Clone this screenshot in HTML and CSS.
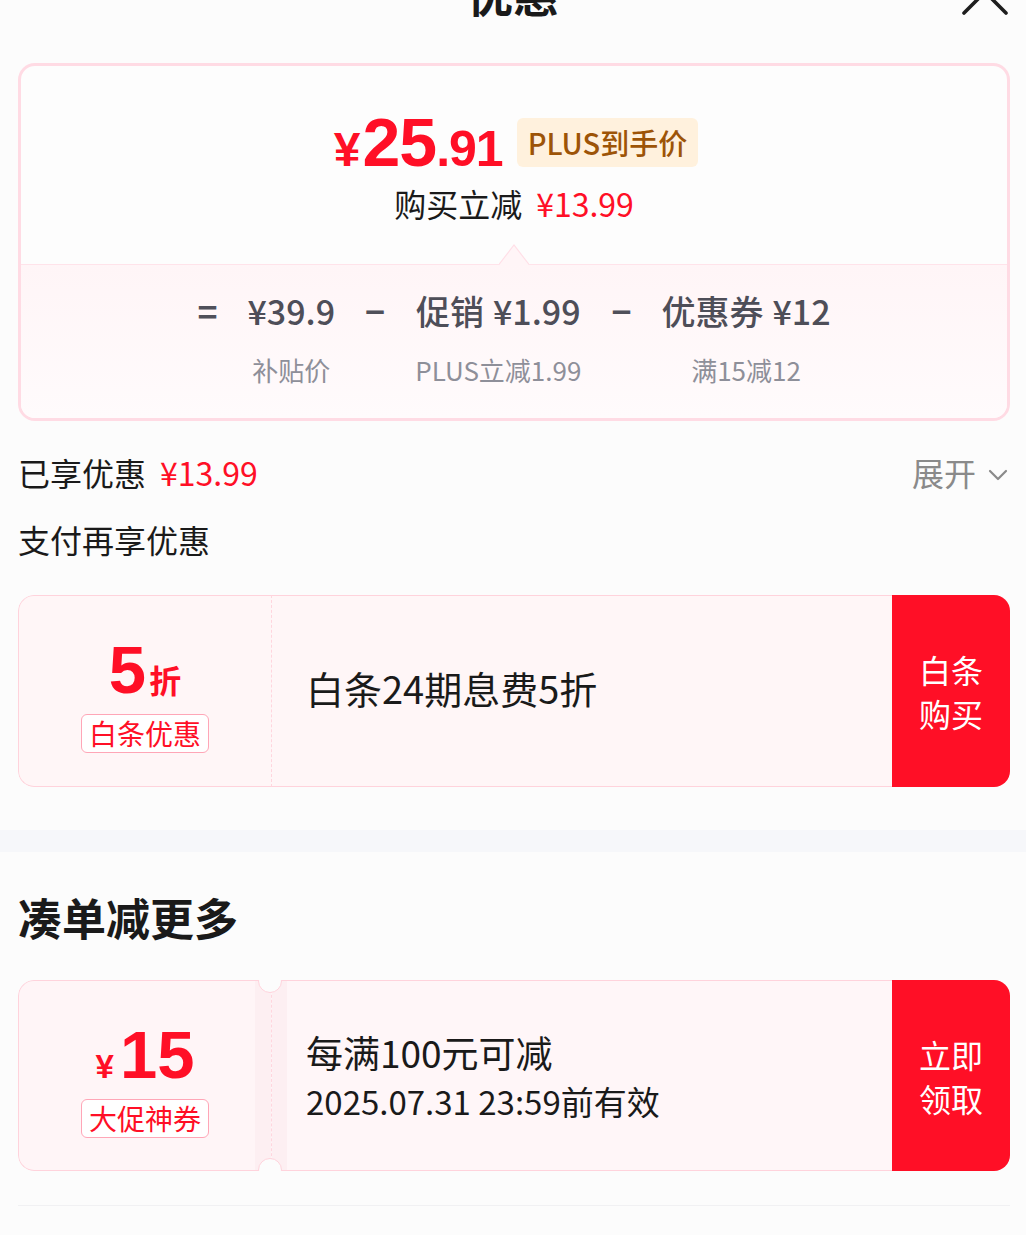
FILE: index.html
```html
<!DOCTYPE html>
<html lang="zh-CN">
<head>
<meta charset="utf-8">
<title>优惠</title>
<link rel="stylesheet" href="styles.css">
</head>
<body>
<div class="sheet">
  <header class="hd">
    <span class="hd-side"></span>
    <h1 class="hd-title">优惠</h1>
    <svg class="hd-close" viewBox="0 0 46 46" aria-label="关闭">
      <path d="M2 2 L44 44 M44 2 L2 44" stroke="#1e1e1e" stroke-width="3.6" stroke-linecap="round" fill="none"/>
    </svg>
  </header>

  <section class="main">
    <div class="price-card">
      <div class="pc-top">
        <div class="pc-price-row">
          <div class="pc-price"><span class="yen">¥</span><span class="int">25</span><span class="dec">.91</span></div>
          <span class="plus-tag">PLUS到手价</span>
        </div>
        <div class="pc-save">购买立减<span class="red gap">¥13.99</span></div>
      </div>
      <div class="pc-bottom">
        <svg class="pc-notch" viewBox="0 0 30 21">
          <polygon points="0,21 15,1 30,21" fill="#fff5f7"/>
          <polyline points="0,20.5 15,1 30,20.5" fill="none" stroke="#ffdfe7" stroke-width="1.2"/>
        </svg>
        <div class="formula">
          <span class="op">=</span>
          <div class="term">
            <div class="term-val">¥39.9</div>
            <div class="term-lbl">补贴价</div>
          </div>
          <span class="op">−</span>
          <div class="term">
            <div class="term-val">促销<span class="sp">¥1.99</span></div>
            <div class="term-lbl">PLUS立减1.99</div>
          </div>
          <span class="op">−</span>
          <div class="term">
            <div class="term-val">优惠券<span class="sp">¥12</span></div>
            <div class="term-lbl">满15减12</div>
          </div>
        </div>
      </div>
    </div>

    <div class="enjoyed">
      <div class="enjoyed-l">已享优惠<span class="red gap">¥13.99</span></div>
      <div class="expand">展开<svg class="chev" viewBox="0 0 20 12"><polyline points="2,2 10,10 18,2" fill="none" stroke="#8a8a8a" stroke-width="2.2" stroke-linecap="round" stroke-linejoin="round"/></svg></div>
    </div>

    <div class="sub-title">支付再享优惠</div>

    <div class="coupon">
      <div class="cp-left">
        <div class="cp-amount"><span class="big">5</span><span class="unit">折</span></div>
        <div class="cp-badge">白条优惠</div>
      </div>
      <div class="cp-mid">
        <div class="cp-line1 wide">白条24期息费5折</div>
      </div>
      <div class="cp-btn">白条<br>购买</div>
    </div>
  </section>

  <div class="band"></div>

  <section class="more">
    <h2 class="more-title">凑单减更多</h2>
    <div class="coupon ticket">
      <div class="cp-left">
        <div class="cp-amount"><span class="yen-s">¥</span><span class="big">15</span></div>
        <div class="cp-badge">大促神券</div>
      </div>
      <div class="cp-mid">
        <div class="cp-line1">每满100元可减</div>
        <div class="cp-line2">2025.07.31 23:59前有效</div>
      </div>
      <div class="cp-btn">立即<br>领取</div>
    </div>
    <div class="end-line"></div>
  </section>
</div>
</body>
</html>
```

FILE: styles.css
```css
* {
  box-sizing: border-box;
  margin: 0;
  padding: 0;
}

body {
  background: #fcfcfc;
  font-family: "Noto Sans CJK SC", "Noto Sans", sans-serif;
  color: #1a1a1a;
  overflow: hidden;
}

.red { color: #ff0f26; }
.gap { margin-left: 14px; }

/* header */
.hd {
  display: grid;
  grid-template-columns: 1fr auto 1fr;
  align-items: center;
  height: 60px;
  margin-top: -38px;
}
.hd-title {
  font-size: 46px;
  font-weight: 700;
  line-height: 60px;
  color: #1a1a1a;
}
.hd-close {
  justify-self: end;
  width: 46px;
  height: 46px;
  margin-right: 18px;
}

/* main */
.main {
  padding: 41px 16px 43px 18px;
}

.price-card {
  border: 3px solid #ffdbe4;
  border-radius: 17px;
  overflow: hidden;
  background: #fdfdfd;
}
.pc-top {
  padding: 42px 0 39px;
  display: flex;
  flex-direction: column;
  align-items: center;
}
.pc-price-row {
  display: flex;
  align-items: center;
  gap: 14px;
  height: 68px;
  margin-left: 4px;
}
.pc-price {
  font-family: "Liberation Sans", Arial, sans-serif;
  font-weight: 700;
  color: #ff0f26;
  font-size: 68px;
  line-height: 68px;
  height: 68px;
  white-space: nowrap;
  letter-spacing: -1px;
}
.pc-price .yen { font-size: 48px; margin-right: 3px; }
.pc-price .dec { font-size: 50px; }
.plus-tag {
  height: 49px;
  padding: 0 11px;
  background: #fff1dd;
  color: #9d5407;
  border-radius: 6px;
  font-size: 29px;
  font-weight: 500;
  display: flex;
  align-items: center;
  white-space: nowrap;
}
.pc-save {
  margin-top: 5px;
  font-size: 32px;
  line-height: 44px;
  color: #1a1a1a;
}

.pc-bottom {
  position: relative;
  border-top: 1px solid #ffe3ea;
  background: linear-gradient(#fff5f7, #fffbfc);
  padding: 23px 0 30px;
}
.pc-notch {
  position: absolute;
  left: 50%;
  top: -21px;
  width: 30px;
  height: 21px;
  transform: translateX(-50%);
}
.formula {
  display: flex;
  justify-content: center;
  gap: 30px;
}
.op {
  font-size: 34px;
  line-height: 46px;
  font-weight: 700;
  color: #50505a;
}
.term {
  display: flex;
  flex-direction: column;
  align-items: center;
}
.term-val {
  font-size: 34px;
  line-height: 46px;
  font-weight: 500;
  color: #4e4e58;
  white-space: nowrap;
}
.term-val .sp { margin-left: 9px; }
.term-lbl {
  margin-top: 18px;
  font-size: 26px;
  line-height: 36px;
  color: #8e8f99;
  white-space: nowrap;
}

/* enjoyed row */
.enjoyed {
  display: flex;
  justify-content: space-between;
  align-items: center;
  margin-top: 29px;
  height: 44px;
  font-size: 32px;
  line-height: 44px;
}
.expand {
  display: flex;
  align-items: center;
  color: #8a8a8a;
}
.chev {
  width: 20px;
  height: 12px;
  margin-left: 12px;
  margin-right: 2px;
  margin-top: 6px;
}
.sub-title {
  margin-top: 23px;
  font-size: 32px;
  line-height: 44px;
}

/* coupons */
.coupon {
  display: flex;
  height: 192px;
  margin-top: 34px;
  border-radius: 16px;
  overflow: hidden;
}
.cp-left {
  position: relative;
  width: 254px;
  flex: none;
  border: 1px solid #ffd3dc;
  border-right: 1px dashed #ffd6de;
  border-radius: 16px 0 0 16px;
  background: #fff6f7;
  display: flex;
  flex-direction: column;
  align-items: center;
  justify-content: center;
  padding-top: 7px;
}
.cp-amount {
  display: flex;
  align-items: baseline;
  color: #ff0f26;
}
.cp-amount .big {
  font-family: "Liberation Sans", Arial, sans-serif;
  font-weight: 700;
  font-size: 67px;
  line-height: 67px;
}
.cp-amount .unit {
  font-size: 32px;
  font-weight: 700;
  margin-left: 3px;
}
.cp-amount .yen-s {
  font-family: "Liberation Sans", Arial, sans-serif;
  font-weight: 700;
  font-size: 33px;
  margin-right: 6px;
}
.cp-badge {
  margin-top: 11px;
  height: 39px;
  padding: 0 7px;
  border: 1px solid #ffa6b7;
  border-radius: 6px;
  background: #fff;
  color: #ff0f26;
  font-size: 28px;
  line-height: 37px;
  white-space: nowrap;
}
.cp-mid {
  flex: 1;
  border-top: 1px solid #ffd3dc;
  border-bottom: 1px solid #ffd3dc;
  background: #fff6f7;
  padding-left: 34px;
  display: flex;
  flex-direction: column;
  justify-content: center;
}
.cp-line1 {
  font-size: 37px;
  line-height: 48px;
  color: #1a1a1a;
  white-space: nowrap;
}
.cp-line1.wide {
  font-size: 38px;
  margin-top: -6px;
}
.cp-line2 {
  margin-top: 3px;
  font-size: 33px;
  line-height: 44px;
  color: #1a1a1a;
  white-space: nowrap;
}
.cp-btn {
  width: 118px;
  flex: none;
  background: #ff0f26;
  color: #fff;
  font-size: 32px;
  line-height: 44px;
  text-align: center;
  display: flex;
  align-items: center;
  justify-content: center;
}

/* band */
.band {
  height: 22px;
  background: #f6f7fa;
}

.more {
  padding: 37px 16px 0 18px;
}
.more-title {
  font-size: 44px;
  font-weight: 700;
  line-height: 56px;
  color: #1a1a1a;
}
.ticket {
  height: 191px;
  margin-top: 35px;
}
.ticket .cp-left {
  background: linear-gradient(to right, #fff5f7 236px, #fdeff2 236px);
}
.ticket .cp-mid {
  background: linear-gradient(to right, #fdeff2 15px, #fff6f8 15px);
}
.ticket .cp-left::before,
.ticket .cp-left::after {
  content: "";
  position: absolute;
  right: -11px;
  width: 22px;
  height: 22px;
  border-radius: 50%;
  background: #fcfcfc;
  border: 1px solid #ffd3dc;
}
.ticket .cp-left::before { top: -12px; }
.ticket .cp-left::after { bottom: -12px; }

.end-line {
  margin-top: 34px;
  height: 1px;
  background: #f1f1f3;
}
```
